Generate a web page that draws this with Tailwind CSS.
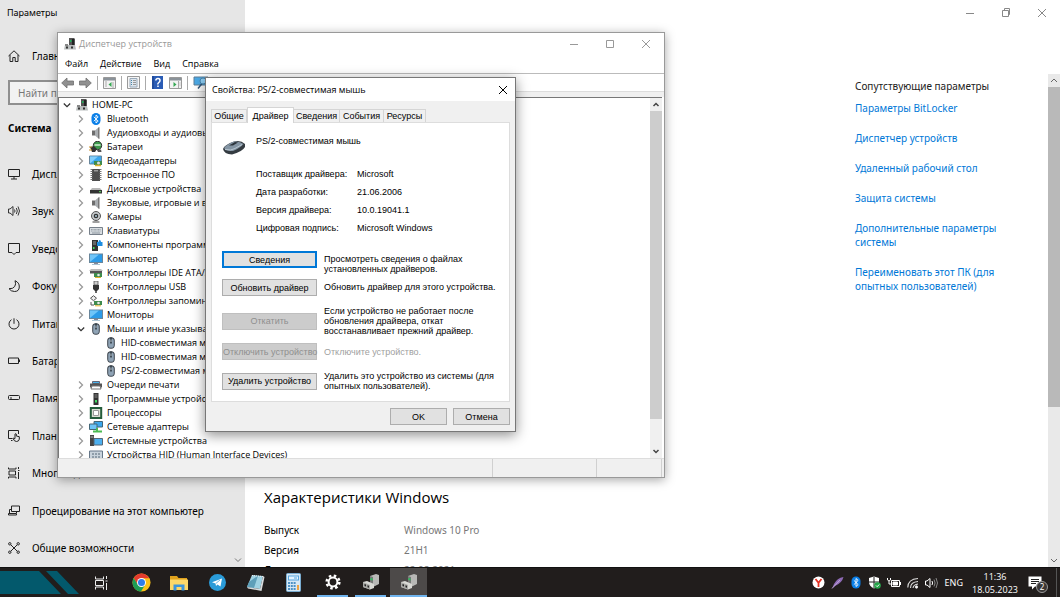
<!DOCTYPE html>
<html lang="ru">

<head>
    <meta charset="UTF-8">
    <meta name="viewport" content="width=device-width, initial-scale=1.0">
    <script src="https://cdn.jsdelivr.net/npm/@tailwindcss/browser@4"></script>
    <title>Диспетчер устройств</title>
</head>

<body class="h-screen flex flex-col overflow-hidden bg-white text-black text-[10px] leading-[14px] font-['Noto_Sans','Open_Sans',sans-serif]">

    <!-- shared icons -->
    <svg class="hidden">
        <symbol id="right" viewBox="0 0 8 10"><path d="M2 1.5L5.5 5L2 8.500" fill="none" stroke="#9a9a9a" stroke-width="1.3" /></symbol>
        <symbol id="down" viewBox="0 0 8 10"><path d="M.8 3.500L4 6.700L7.200 3.500" fill="none" stroke="#333" stroke-width="1.3" /></symbol>
        <symbol id="min" viewBox="0 0 10 10"><path d="M1 5.500h8" stroke="currentColor" /></symbol>
        <symbol id="close" viewBox="0 0 10 10"><path d="M1 1l8 8M9 1l-8 8" stroke="currentColor" /></symbol>
        <symbol id="pc" viewBox="0 0 12 12">
            <path d="M5 0h5l1 1v6H5z" fill="#555" /><path d="M8 1h2v6H8z" fill="#222" /><path d="M6 2h1.500v2H6z" fill="#1fae5a" />
            <path d="M1 7h10l1 4.500H0z" fill="#b9bdbd" /><path d="M1 6h3v2H1z" fill="#888" /><path d="M2 8.500h2v2H2zM7 8.500h2v2H7z" fill="#333" />
        </symbol>
        <symbol id="mouse" viewBox="0 0 12 12">
            <rect x="2.200" y=".3" width="7.600" height="11.400" rx="3.600" fill="#3a424b" /><rect x="3.200" y="1.200" width="5.600" height="9.600" rx="2.600" fill="#8fa3b5" />
            <path d="M6 .5v6" stroke="#222b33" stroke-width="1.400" /><path d="M6 2.500v2.500" stroke="#dfe8ee" stroke-width=".7" />
        </symbol>
        <symbol id="speaker" viewBox="0 0 12 12">
            <path d="M2 3.500h3v5H2z" fill="#6d6d6d" /><path d="M5 3.500L9 0v12L5 8.500z" fill="#a9adb0" /><path d="M8 1L9.500 0v12L8 11z" fill="#777" />
        </symbol>
        <symbol id="monitor" viewBox="0 0 14 12">
            <rect x=".5" y="1" width="13" height="8.500" fill="#2c9be8" stroke="#69869b" /><path d="M1 9V1.500h9z" fill="#6fc5f9" /><path d="M5 10h4v1H5z" fill="#889" /><path d="M3 11.500h8" stroke="#a9c3d3" />
        </symbol>
        <symbol id="device" viewBox="0 0 18 18">
            <path d="M8 3l6-2 3 1v9l-6 3-3-2z" fill="#b8b8b6" /><path d="M8 3l3 1v10l-3-2z" fill="#777" /><path d="M8.500 5l2 .5v2l-2-.5z" fill="#27c15a" />
            <path d="M1 9l4-1 7 3v4l-4 1.500L1 14z" fill="#d9d9d5" /><path d="M1 9l7 3v4.500L1 14z" fill="#a9a9a6" /><path d="M2.500 11l1.500.6v2L2.500 13zM5.500 12.200l1.500.6v2l-1.500-.6z" fill="#222" />
        </symbol>
        <symbol id="bluetooth" viewBox="0 0 12 12">
            <rect x="1.500" width="9" height="12" rx="4.500" fill="#0a7fe8" /><path d="M3.800 3.800l4.400 4.300L6 10V2l2.200 1.900-4.400 4.300" fill="none" stroke="#fff" stroke-width=".9" />
        </symbol>
    </svg>

    <div class="relative flex-1 min-h-0 overflow-hidden flex">

        <!-- settings: left menu -->
        <nav class="relative w-[245px] shrink-0 bg-[#e6e6e6] flex flex-col">
            <h1 class="h-[25px] pl-[7px] pt-[6px] text-[9px]">Параметры</h1>
            <a href="#" class="h-[55px] px-2 pt-[6px] flex items-center gap-3">
                <svg class="w-3 h-3" viewBox="0 0 12 12" fill="none" stroke="#222"><path d="M.5 6L6 .8 11.500 6M2 5v6.500h2.800V7.500h2.400v4H10V5" /></svg>Главная
            </a>
            <input type="text" placeholder="Найти параметр" aria-label="Найти параметр" class="mx-2 h-[25px] border-2 border-[#8f8f8f] px-2 placeholder:text-[#777] bg-[#f2f2f2]">
            <h2 class="h-[50px] pl-2 pt-4 font-bold">Система</h2>
            <div class="flex-1 flex flex-col">
                <a href="#" class="flex-1 px-2 flex items-center gap-3">
                    <svg class="w-3 h-3" viewBox="0 0 12 12" fill="none" stroke="#222"><path d="M.5 1.500h11v7H.5zM6 8.500v2.500M3 11h6" /></svg>Дисплей
                </a>
                <a href="#" class="flex-1 px-2 flex items-center gap-3">
                    <svg class="w-3 h-3" viewBox="0 0 12 12" fill="none" stroke="#222"><path d="M.5 4v4H2l3 2.500v-9L2 4zM6.500 4.500q1 1.500 0 3M8.300 3q2 3 0 6M10 1.500q3 4.500 0 9" stroke-width=".9" /></svg>Звук
                </a>
                <a href="#" class="flex-1 px-2 flex items-center gap-3">
                    <svg class="w-3 h-3" viewBox="0 0 12 12" fill="none" stroke="#222"><path d="M.5.5h11v9H8l-2 2-2-2H.5z" /></svg>Уведомления и действия
                </a>
                <a href="#" class="flex-1 px-2 flex items-center gap-3">
                    <svg class="w-3 h-3" viewBox="0 0 12 12" fill="none" stroke="#222"><path d="M7 .7Q11.500 2.500 11.300 7T6.500 11.500Q3 11.500 1 8.700 5 9 6.700 6.500T7 .7z" /></svg>Фокусировка внимания
                </a>
                <a href="#" class="flex-1 px-2 flex items-center gap-3">
                    <svg class="w-3 h-3" viewBox="0 0 12 12" fill="none" stroke="#222"><path d="M6 .3v5.500M3.500 1.700a5 5 0 1 0 5 0" /></svg>Питание и спящий режим
                </a>
                <a href="#" class="flex-1 px-2 flex items-center gap-3">
                    <svg class="w-3 h-3" viewBox="0 0 12 12" fill="none" stroke="#222"><path d="M.5 3h10v5.500H.5zM11.500 4.500v2.500" /></svg>Батарея
                </a>
                <a href="#" class="flex-1 px-2 flex items-center gap-3">
                    <svg class="w-3 h-3" viewBox="0 0 12 12" fill="none" stroke="#222"><rect x=".5" y="3.500" width="11" height="4" rx="1" /><path d="M2 6h2" /></svg>Память
                </a>
                <a href="#" class="flex-1 px-2 flex items-center gap-3">
                    <svg class="w-3 h-3" viewBox="0 0 12 12" fill="none" stroke="#222"><path d="M4.500 8.500h-4v-8h10v3.500M7 8.500V4q.7-.8 1.300 0v2l3 .7v2.500q-.5 2.300-2.800 2.300T5 8.500q.7-1 2 .5M3 10.500h1.500" /></svg>Планшет
                </a>
                <a href="#" class="flex-1 px-2 flex items-center gap-3">
                    <svg class="w-3 h-3" viewBox="0 0 12 12" fill="none" stroke="#222"><path d="M.5.500v1.500h7.500V.500M1 4h6.500v4H1zM.5 11.500V10h7.500v1.500M10.500 0v2M10.500 5v7M10 3.500h1.500" /></svg>Многозадачность
                </a>
                <a href="#" class="flex-1 px-2 flex items-center gap-3">
                    <svg class="w-3 h-3" viewBox="0 0 12 12" fill="none" stroke="#222"><path d="M3.500 1h8v5.500h-8zM3.500 4.500h-2v4M.5 8.500v1.500h8V8.500zM8.500 8V6.500" /></svg>Проецирование на этот компьютер
                </a>
                <a href="#" class="flex-1 px-2 flex items-center gap-3">
                    <svg class="w-3 h-3" viewBox="0 0 12 12" fill="none" stroke="#222"><path d="M3 3l6 6M9 3L3 9" /><circle cx="1.800" cy="1.800" r="1.200" /><circle cx="10.200" cy="1.800" r="1.200" /><circle cx="1.800" cy="10.200" r="1.200" /><circle cx="10.200" cy="10.200" r="1.200" /></svg>Общие возможности
                </a>
            </div>
            <svg class="absolute right-[3px] bottom-[3px] w-2 h-2" viewBox="0 0 8 8" fill="none" stroke="#777"><path d="M1 2.500l3 3 3-3" /></svg>
        </nav>

        <!-- settings: page -->
        <div class="flex-1 min-w-0 flex flex-col">
            <div class="h-[25px] shrink-0 flex justify-end text-[#888]">
                <button class="w-9 flex items-center justify-center" aria-label="Свернуть"><svg class="w-[10px] h-[10px]"><use href="#min" /></svg></button>
                <button class="w-9 flex items-center justify-center" aria-label="Восстановить"><svg class="w-[10px] h-[10px]" viewBox="0 0 10 10" fill="none" stroke="currentColor"><path d="M1.500 2.500h6v6h-6zM3.500 2.500V.5h5v6h-1" /></svg></button>
                <button class="w-9 flex items-center justify-center" aria-label="Закрыть"><svg class="w-[10px] h-[10px]"><use href="#close" /></svg></button>
            </div>
            <div class="flex-1 min-h-0 flex">
                <main class="flex-1 min-w-0 pl-[19px] pt-[462px]">
                    <h2 class="text-[15px] leading-5 font-['Open_Sans','Noto_Sans',sans-serif]">Характеристики Windows</h2>
                    <dl class="mt-[13px] grid grid-cols-[140px_1fr] leading-[20px]">
                        <dt>Выпуск</dt><dd class="text-[#777]">Windows 10 Pro</dd>
                        <dt>Версия</dt><dd class="text-[#777]">21H1</dd>
                        <dt>Дата установки</dt><dd class="text-[#777]">22.08.2021</dd>
                    </dl>
                </main>
                <aside class="w-[155px] mr-[38px] pt-[54px] text-[#0078d7] flex flex-col items-start gap-4">
                    <h3 class="text-[#222] -mb-2">Сопутствующие параметры</h3>
                    <a href="#">Параметры BitLocker</a>
                    <a href="#">Диспетчер устройств</a>
                    <a href="#">Удаленный рабочий стол</a>
                    <a href="#">Защита системы</a>
                    <a href="#">Дополнительные параметры системы</a>
                    <a href="#">Переименовать этот ПК (для опытных пользователей)</a>
                </aside>
                <div class="w-3 mt-[49px] bg-[#e9e9e9] flex flex-col items-center">
                    <svg class="w-2 h-[13px] shrink-0" viewBox="0 0 8 13" fill="none" stroke="#666"><path d="M1 8l3-3 3 3" /></svg>
                    <div class="w-full h-[65%] bg-[#b9b9b9]"></div>
                    <svg class="w-2 h-[13px] mt-auto" viewBox="0 0 8 13" fill="none" stroke="#666"><path d="M1 5l3 3 3-3" /></svg>
                </div>
            </div>
        </div>

        <!-- device manager window -->
        <section class="absolute left-[57px] top-[32px] w-[608px] h-[446px] bg-white border border-[#999] shadow-[0_2px_10px_rgba(0,0,0,0.35)] flex flex-col text-[9px] font-['Open_Sans','Noto_Sans',sans-serif]">
            <header class="h-[22px] shrink-0 flex items-center text-[#999]">
                <svg class="w-3 h-3 ml-[6px] mr-[3px]"><use href="#pc" /></svg>
                <h2>Диспетчер устройств</h2>
                <button class="ml-auto w-9 h-full flex items-center justify-center" aria-label="Свернуть"><svg class="w-[10px] h-[10px]"><use href="#min" /></svg></button>
                <button class="w-9 h-full flex items-center justify-center" aria-label="Развернуть"><svg class="w-[10px] h-[10px]" viewBox="0 0 10 10" fill="none" stroke="currentColor"><path d="M1.500 1.500h7v7h-7z" /></svg></button>
                <button class="w-9 h-full flex items-center justify-center" aria-label="Закрыть"><svg class="w-[10px] h-[10px]"><use href="#close" /></svg></button>
            </header>
            <div class="h-[18px] shrink-0 px-[7px] flex items-center gap-3">
                <button>Файл</button><button>Действие</button><button>Вид</button><button>Справка</button>
            </div>
            <div class="h-[19px] shrink-0 border-y border-[#bbb] border-b-[#ddd] pl-[3px] flex items-center gap-[5px]">
                <button aria-label="Назад"><svg class="w-[13px] h-[12px]" viewBox="0 0 13 12"><path d="M.7 6L6 1v3h6.500v4H6v3z" fill="#909090" stroke="#6f6f6f" stroke-width=".8" /></svg></button>
                <button aria-label="Вперед"><svg class="w-[13px] h-[12px]" viewBox="0 0 13 12"><path d="M12.300 6L7 1v3H.5v4H7v3z" fill="#909090" stroke="#6f6f6f" stroke-width=".8" /></svg></button>
                <i class="w-px h-[14px] bg-[#aaa]"></i>
                <button aria-label="Дерево консоли"><svg class="w-[13px] h-[12px]" viewBox="0 0 13 12"><path d="M.5.500h12v11H.5z" fill="#f3f3f3" stroke="#999" /><path d="M1 1h11v2.500H1z" fill="#8a9299" /><path d="M2 5h2M2 7h2M2 9h2M10 5v6" stroke="#aaa" /><path d="M8.500 5v5L5.500 7.500z" fill="#35a853" /></svg></button>
                <i class="w-px h-[14px] bg-[#aaa]"></i>
                <button aria-label="Свойства"><svg class="w-[13px] h-[13px]" viewBox="0 0 13 13"><path d="M.5.500h12v12H.5z" fill="#f5f5f5" stroke="#999" /><path d="M3 2.500h7v8.500H3z" fill="#dfe7ee" stroke="#9ab" /><path d="M4 4.500h1M4 6.500h1M4 8.500h1" stroke="#48a" /><path d="M6 4.500h3M6 6.500h3M6 8.500h3" stroke="#999" /></svg></button>
                <i class="w-px h-[14px] bg-[#aaa]"></i>
                <button aria-label="Справка"><svg class="w-[13px] h-[13px]" viewBox="0 0 13 13"><path d="M1 0h11v13H1z" fill="#2a5cb5" /><path d="M2 0v13" stroke="#163d85" /><path d="M4.800 4.500Q5 2.500 7 2.500t2 2q0 1.200-1.200 2T7 8.500M7 9.500v1.500" fill="none" stroke="#fff" stroke-width="1.500" /></svg></button>
                <button aria-label="Панель действий"><svg class="w-[13px] h-[12px]" viewBox="0 0 13 12"><path d="M.5.500h12v11H.5z" fill="#f3f3f3" stroke="#999" /><path d="M1 1h11v2.500H1z" fill="#8a9299" /><path d="M9.500 4v7M10.500 6h1M10.500 8h1" stroke="#aaa" /><path d="M4.500 5v5l3-2.500z" fill="#35a853" /></svg></button>
                <i class="w-px h-[14px] bg-[#aaa]"></i>
                <button aria-label="Обновить конфигурацию"><svg class="w-[16px] h-[13px]" viewBox="0 0 16 13"><path d="M1 1h14v8H1z" fill="#4ba9e6" stroke="#5d7f98" /><path d="M5 12.500l4-5" stroke="#357" stroke-width="1.500" /><circle cx="10" cy="5" r="3" fill="#8fd0f7" stroke="#4b86ad" /></svg></button>
            </div>
            <div class="h-[5px] shrink-0 bg-[#f0f0f0]"></div>
            <div class="flex-1 min-h-0 border-t border-l border-[#777] mr-[2px] flex">
                <ul class="flex-1 overflow-hidden pl-1 whitespace-nowrap [&_li]:h-[14px] [&_li]:flex [&_li]:items-center [&_svg]:shrink-0">
                    <li><svg class="w-2 h-[10px]"><use href="#down" /></svg><svg class="w-3 h-3 ml-[5px] mr-1"><use href="#pc" /></svg>HOME-PC</li>
                    <li class="pl-[14px]"><svg class="w-2 h-[10px]"><use href="#right" /></svg><svg class="w-[14px] h-3 mx-1"><use href="#bluetooth" /></svg>Bluetooth</li>
                    <li class="pl-[14px]"><svg class="w-2 h-[10px]"><use href="#right" /></svg><svg class="w-[14px] h-3 mx-1"><use href="#speaker" /></svg>Аудиовходы и аудиовыходы</li>
                    <li class="pl-[14px]"><svg class="w-2 h-[10px]"><use href="#right" /></svg><svg class="w-[14px] h-3 mx-1" viewBox="0 0 14 12"><circle cx="8.500" cy="4.500" r="4.200" fill="#3c9a4c" stroke="#333" /><path d="M5.500 4h6" stroke="#dff5df" stroke-width="1.400" /><path d="M1 6l4-1 3 3-2 3H3z" fill="#333" /><path d="M0 6h3M0 9h3" stroke="#c98e27" /><path d="M8 9l4-.5.5 2.500H9z" fill="#555" /></svg>Батареи</li>
                    <li class="pl-[14px]"><svg class="w-2 h-[10px]"><use href="#right" /></svg><svg class="w-[14px] h-3 mx-1" viewBox="0 0 14 12"><path d="M.5 1h12v8H.5z" fill="#3ba7ee" stroke="#69869b" /><path d="M1 8.500v-7h8z" fill="#83cffb" /><path d="M5 6h8v4H5z" fill="#3e8b4d" /><circle cx="9.500" cy="8" r="1.500" fill="#ddd" /><path d="M6 10.500h6" stroke="#e0b32a" stroke-width="1.500" /></svg>Видеоадаптеры</li>
                    <li class="pl-[14px]"><svg class="w-2 h-[10px]"><use href="#right" /></svg><svg class="w-[14px] h-3 mx-1" viewBox="0 0 14 12"><path d="M3 0h8v12H3z" fill="#4d4d4d" /><path d="M2.500 0v12M11.500 0v12" stroke="#777" stroke-width="2" stroke-dasharray="1 1" /><path d="M5 1h4v1.500H5z" fill="#999" /></svg>Встроенное ПО</li>
                    <li class="pl-[14px]"><svg class="w-2 h-[10px]"><use href="#right" /></svg><svg class="w-[14px] h-3 mx-1" viewBox="0 0 14 12"><path d="M3 5h8l2 2.500H1z" fill="#b7b7b7" /><path d="M1 7h12v3.500H1z" fill="#333" /><path d="M10 8.700h2" stroke="#5ddf62" /></svg>Дисковые устройства</li>
                    <li class="pl-[14px]"><svg class="w-2 h-[10px]"><use href="#right" /></svg><svg class="w-[14px] h-3 mx-1"><use href="#speaker" /></svg>Звуковые, игровые и видеоустройства</li>
                    <li class="pl-[14px]"><svg class="w-2 h-[10px]"><use href="#right" /></svg><svg class="w-[14px] h-3 mx-1" viewBox="0 0 14 12"><circle cx="7" cy="5" r="4.500" fill="#c2c6c9" stroke="#555" /><circle cx="7" cy="5" r="2.300" fill="#333" /><circle cx="7" cy="5" r=".9" fill="#bde" /><path d="M3.500 11h7" stroke="#888" stroke-width="1.600" /></svg>Камеры</li>
                    <li class="pl-[14px]"><svg class="w-2 h-[10px]"><use href="#right" /></svg><svg class="w-[14px] h-3 mx-1" viewBox="0 0 14 12"><path d="M.5 2.500h13v7H.5z" fill="#d8dde1" stroke="#77808a" /><path d="M2 4.500h10M2 6h10" stroke="#8b949d" stroke-width=".8" stroke-dasharray="1 .4" /><path d="M3 8h8" stroke="#8b949d" /></svg>Клавиатуры</li>
                    <li class="pl-[14px]"><svg class="w-2 h-[10px]"><use href="#right" /></svg><svg class="w-[14px] h-3 mx-1" viewBox="0 0 14 12"><path d="M3 1h6v11H3z" fill="#333" /><path d="M4 3h3M4 5h3" stroke="#999" /><path d="M4 8h1.500v2H4z" fill="#3edc63" /><path d="M8 3h1.500q0-2 1.200-2t1.300 2h1.500v4H8z" fill="#1e8de0" /></svg>Компоненты программного обеспечения</li>
                    <li class="pl-[14px]"><svg class="w-2 h-[10px]"><use href="#right" /></svg><svg class="w-[14px] h-3 mx-1"><use href="#monitor" /></svg>Компьютер</li>
                    <li class="pl-[14px]"><svg class="w-2 h-[10px]"><use href="#right" /></svg><svg class="w-[14px] h-3 mx-1" viewBox="0 0 14 12"><path d="M2 2h10l2 2H0z" fill="#bbb" /><path d="M1 4h12v2.500H1z" fill="#555" /><path d="M5 6h8v4H5z" fill="#3e8b4d" /><circle cx="9.500" cy="8" r="1.300" fill="#e8e8e8" /><path d="M6 10.500h6" stroke="#e0b32a" /></svg>Контроллеры IDE ATA/ATAPI</li>
                    <li class="pl-[14px]"><svg class="w-2 h-[10px]"><use href="#right" /></svg><svg class="w-[14px] h-3 mx-1" viewBox="0 0 14 12"><path d="M5 0h4v4H5z" fill="#ccc" stroke="#555" stroke-width=".8" /><path d="M4 4h6v4L8 10H6L4 8z" fill="#333" /><path d="M7 10v2" stroke="#333" stroke-width="1.500" /></svg>Контроллеры USB</li>
                    <li class="pl-[14px]"><svg class="w-2 h-[10px]"><use href="#right" /></svg><svg class="w-[14px] h-3 mx-1" viewBox="0 0 14 12"><path d="M4.500.7l3 2.500-3 2.500-3-2.500z" fill="#eee" stroke="#555" /><path d="M2 7v3h3" fill="none" stroke="#555" /><path d="M5 6h8v4H5z" fill="#3e8b4d" /><circle cx="9.500" cy="8" r="1.300" fill="#e8e8e8" /><path d="M6 10.800h6" stroke="#e0b32a" /></svg>Контроллеры запоминающих устройств</li>
                    <li class="pl-[14px]"><svg class="w-2 h-[10px]"><use href="#right" /></svg><svg class="w-[14px] h-3 mx-1"><use href="#monitor" /></svg>Мониторы</li>
                    <li class="pl-[14px]"><svg class="w-2 h-[10px]"><use href="#down" /></svg><svg class="w-[14px] h-3 mx-1"><use href="#mouse" /></svg>Мыши и иные указывающие устройства</li>
                    <li class="pl-[41px]"><svg class="w-[14px] h-3 mr-[3px]"><use href="#mouse" /></svg>HID-совместимая мышь</li>
                    <li class="pl-[41px]"><svg class="w-[14px] h-3 mr-[3px]"><use href="#mouse" /></svg>HID-совместимая мышь</li>
                    <li class="pl-[41px]"><svg class="w-[14px] h-3 mr-[3px]"><use href="#mouse" /></svg>PS/2-совместимая мышь</li>
                    <li class="pl-[14px]"><svg class="w-2 h-[10px]"><use href="#right" /></svg><svg class="w-[14px] h-3 mx-1" viewBox="0 0 14 12"><path d="M3.500 2.500h7v2h-7z" fill="#49b4ec" stroke="#667" /><path d="M1 4.500h12v4H1z" fill="#555" /><path d="M3 7h8l1 3H2z" fill="#fff" stroke="#777" /></svg>Очереди печати</li>
                    <li class="pl-[14px]"><svg class="w-2 h-[10px]"><use href="#right" /></svg><svg class="w-[14px] h-3 mx-1" viewBox="0 0 14 12"><path d="M4.500 0h5v12h-5z" fill="#333" /><path d="M5.500 2h3M5.500 4h3" stroke="#888" /><path d="M6 7h2v2.500H6z" fill="#3edc63" /></svg>Программные устройства</li>
                    <li class="pl-[14px]"><svg class="w-2 h-[10px]"><use href="#right" /></svg><svg class="w-[14px] h-3 mx-1" viewBox="0 0 14 12"><path d="M1.800 1h10.400v10H1.800z" fill="#d9ddd2" stroke="#245c3b" stroke-width="2" /><path d="M4.500 3.500h5v5h-5z" fill="#fff" stroke="#999" /></svg>Процессоры</li>
                    <li class="pl-[14px]"><svg class="w-2 h-[10px]"><use href="#right" /></svg><svg class="w-[14px] h-3 mx-1" viewBox="0 0 14 12"><path d="M5 .5h8.500V6H5z" fill="#3ba7ee" stroke="#467" /><path d="M.5 3H8v5.500H.5z" fill="#6cc3f7" stroke="#467" /><path d="M4 10.500h9" stroke="#4cba52" stroke-width="2" /><path d="M8 7v3" stroke="#4cba52" stroke-width="2" /></svg>Сетевые адаптеры</li>
                    <li class="pl-[14px]"><svg class="w-2 h-[10px]"><use href="#right" /></svg><svg class="w-[14px] h-3 mx-1" viewBox="0 0 14 12"><path d="M1 0h4v11H1z" fill="#444" /><path d="M1.500 2h3" stroke="#bbb" /><path d="M5 3.500h8.500V10H5z" fill="#4cb0f0" stroke="#567" /></svg>Системные устройства</li>
                    <li class="pl-[14px]"><svg class="w-2 h-[10px]"><use href="#right" /></svg><svg class="w-[14px] h-3 mx-1" viewBox="0 0 14 12"><path d="M.5 2h13v8H.5z" fill="#c9d3dc" stroke="#678" /><path d="M3 5h8M3 8h8" stroke="#567" stroke-dasharray="2 1" /></svg>Устройства HID (Human Interface Devices)</li>
                </ul>
                <div class="w-3 bg-[#f0f0f0] flex flex-col items-center">
                    <svg class="w-2 h-[13px] shrink-0" viewBox="0 0 8 13" fill="none" stroke="#444" stroke-width="1.500"><path d="M1.500 8L4 5.500 6.500 8" /></svg>
                    <div class="w-full h-[308px] bg-[#cdcdcd]"></div>
                    <svg class="w-2 h-[13px] mt-auto" viewBox="0 0 8 13" fill="none" stroke="#444" stroke-width="1.500"><path d="M1.500 5L4 7.500 6.500 5" /></svg>
                </div>
            </div>
            <footer class="h-[19px] shrink-0 border-t border-[#ddd] bg-[#f0f0f0] flex justify-end">
                <div class="w-[104px] border-l border-[#d0d0d0]"></div>
                <div class="w-[66px] mr-[2px] border-x border-[#d0d0d0]"></div>
            </footer>
        </section>

        <!-- driver properties dialog -->
        <section role="dialog" aria-labelledby="dialogTitle" class="absolute left-[205px] top-[77px] w-[311px] h-[355px] bg-[#f0f0f0] border border-[#777] shadow-[0_3px_12px_rgba(0,0,0,0.45)] flex flex-col text-[9px] leading-[10px] font-['Liberation_Sans',Arial,sans-serif]">
            <header class="h-[23px] shrink-0 bg-white pl-[6px] flex items-center justify-between font-['Open_Sans','Noto_Sans',sans-serif]">
                <h2 id="dialogTitle">Свойства: PS/2-совместимая мышь</h2>
                <button class="w-6 h-full flex items-center justify-center" aria-label="Закрыть"><svg class="w-[10px] h-[10px]"><use href="#close" /></svg></button>
            </header>
            <div class="mt-[6px] h-[15px] pl-[5px] flex items-end [&_button]:whitespace-nowrap" role="tablist">
                <button role="tab" class="w-9 h-[13px] border border-b-0 border-[#d5d5d5]">Общие</button>
                <button role="tab" aria-selected="true" class="w-[47px] h-4 relative -mb-px bg-white border border-b-0 border-[#d5d5d5]">Драйвер</button>
                <button role="tab" class="w-[46px] h-[13px] border border-b-0 border-l-0 border-[#d5d5d5]">Сведения</button>
                <button role="tab" class="w-11 h-[13px] border border-b-0 border-l-0 border-[#d5d5d5]">События</button>
                <button role="tab" class="w-[42px] h-[13px] border border-b-0 border-l-0 border-[#d5d5d5]">Ресурсы</button>
            </div>
            <div class="mx-[5px] h-[280px] bg-white border border-[#ddd] px-[10px]">
                <div class="h-[42px] pt-[13px] flex items-start gap-[10px]">
                    <svg class="w-6 h-[15px] mt-[4px]" viewBox="0 0 24 15"><path d="M1 9Q2 5 12 1.500 19 0 23 4v3Q20 12 10 14.500 2 14 1 9z" fill="#343b41" /><path d="M2 8Q5 4 12 1.500 18 1 21.500 4 18 8 11 11 4 11.500 2 8z" fill="#8495a4" /><path d="M7 5.500L13 2l3 .5-5 3z" fill="#2c343b" /><path d="M3 9.500q6 1.500 10-1l7-4" stroke="#b9c7d1" fill="none" /></svg>
                    <h3>PS/2-совместимая мышь</h3>
                </div>
                <dl class="pl-[34px] grid grid-cols-[101px_1fr] leading-[18px]">
                    <dt>Поставщик драйвера:</dt><dd>Microsoft</dd>
                    <dt>Дата разработки:</dt><dd>21.06.2006</dd>
                    <dt>Версия драйвера:</dt><dd>10.0.19041.1</dd>
                    <dt>Цифровая подпись:</dt><dd>Microsoft Windows</dd>
                </dl>
                <div class="mt-[14px] flex flex-col [&>div]:flex [&>div]:gap-[7px] [&_button]:w-[95px] [&_button]:h-[17px] [&_button]:shrink-0 [&_button]:border [&_button]:whitespace-nowrap">
                    <div class="h-7">
                        <button class="bg-[#e1e1e1] border-[#0078d7] outline outline-[#0078d7] -outline-offset-2">Сведения</button>
                        <p class="pt-[3px]">Просмотреть сведения о файлах<br>установленных драйверов.</p>
                    </div>
                    <div class="h-[27px]">
                        <button class="bg-[#e1e1e1] border-[#adadad]">Обновить драйвер</button>
                        <p class="pt-[3px]">Обновить драйвер для этого устройства.</p>
                    </div>
                    <div class="items-center">
                        <button disabled class="bg-[#cccccc] border-[#bfbfbf] text-[#8f8f8f]">Откатить</button>
                        <p>Если устройство не работает после<br>обновления драйвера, откат<br>восстанавливает прежний драйвер.</p>
                    </div>
                    <div class="items-center mt-[7px]">
                        <button disabled class="bg-[#cccccc] border-[#bfbfbf] text-[#8f8f8f]">Отключить устройство</button>
                        <p class="text-[#a0a0a0]">Отключите устройство.</p>
                    </div>
                    <div class="items-center mt-[11px]">
                        <button class="bg-[#e1e1e1] border-[#adadad]">Удалить устройство</button>
                        <p>Удалить это устройство из системы (для<br>опытных пользователей).</p>
                    </div>
                </div>
            </div>
            <div class="mt-[6px] mr-[5px] flex justify-end gap-[6px]">
                <button class="w-[57px] h-[17px] bg-[#e1e1e1] border border-[#adadad]">OK</button>
                <button class="w-[57px] h-[17px] bg-[#e1e1e1] border border-[#adadad]">Отмена</button>
            </div>
        </section>
    </div>

    <!-- taskbar -->
    <footer class="h-[30px] shrink-0 bg-[#211d1c] border-t border-[#111] text-white flex [&_button]:flex [&_button]:items-center [&_button]:justify-center">
        <button class="w-[82px]" aria-label="Пуск"><svg class="w-full h-full" viewBox="0 0 82 29"><path d="M0 3h39l22 23H0zM46 3h11l22 23H68z" fill="#03596c" /></svg></button>
        <button class="w-[38px] mr-[2px]" aria-label="Представление задач"><svg class="w-[14px] h-[14px]" viewBox="0 0 14 14" fill="none" stroke="#eee"><path d="M1.500.5V3h8V.5M1.500 4.500h8v5h-8zM1.500 13.500V11h8v2.500M12.500 0v3M12.500 7v7M11.500 5h2" /></svg></button>
        <button class="w-[38px]" aria-label="Chrome"><svg class="w-[19px] h-[19px]" viewBox="0 0 20 20"><circle cx="10" cy="10" r="9.500" fill="#fbc116" /><path d="M1.800 5.200A9.500 9.500 0 0 1 18.200 5.500H10L6 12z" fill="#e33b2e" /><path d="M1.800 5.200A9.500 9.500 0 0 0 9.500 19.500L14 12H6z" fill="#1e9d55" /><circle cx="10" cy="10" r="4.700" fill="#fff" /><circle cx="10" cy="10" r="3.700" fill="#2f7de9" /></svg></button>
        <button class="w-[38px]" aria-label="Проводник"><svg class="w-[18px] h-[16px]" viewBox="0 0 18 16"><path d="M0 1h7l1.500 2H17v3H0z" fill="#e0a21c" /><path d="M0 4.500h18V15H0z" fill="#fcd769" /><path d="M3.500 15.500v-6h11v6h-3V12h-5v3.500z" fill="#3d95db" /></svg></button>
        <button class="w-[38px]" aria-label="Telegram"><svg class="w-[17px] h-[17px]" viewBox="0 0 17 17"><circle cx="8.500" cy="8.500" r="8.500" fill="#2a9bd8" /><path d="M3 8.300L13 4.500 11.500 12.500 8.500 10.500 7 12 6.500 9.500z" fill="#fff" /><path d="M6.800 9.500L11 6" stroke="#2a9bd8" stroke-width=".7" /></svg></button>
        <button class="w-[38px]" aria-label="Блокнот"><svg class="w-[19px] h-[18px]" viewBox="0 0 19 18"><path d="M6 1l11 1-3 13-13-2z" fill="#9fd2e3" /><path d="M12 1.500L8 14l-7-1 2-5z" fill="#5e9fb9" /><path d="M17 2l1.500 1-3 14L2 14.500 1 13l13 2z" fill="#d9dcdd" /><path d="M6 1.500l11 1" stroke="#f3f3f3" stroke-dasharray="1 1" /></svg></button>
        <button class="w-[38px] mr-[2px]" aria-label="Калькулятор"><svg class="w-[15px] h-[19px]" viewBox="0 0 15 19"><rect x=".5" y=".5" width="14" height="18" rx="1" fill="#d6e8f5" stroke="#79acd0" /><path d="M2 2.500h11v5H2z" fill="#57a4dc" /><path d="M3 3.500h9v3H3z" fill="#e4f4ff" /><path d="M8 5h3" stroke="#57a4dc" /><path d="M2 10h8M2 13h8M2 16h8" stroke="#4e92c5" stroke-width="1.800" stroke-dasharray="2 .8" /><path d="M11 12h2v5h-2z" fill="#eda343" /></svg></button>
        <button class="w-[31px] mx-[3px] border-b-2 border-[#70b4ee]" aria-label="Параметры"><svg class="w-4 h-4" viewBox="0 0 16 16"><circle cx="8" cy="8" r="6.300" fill="none" stroke="#fff" stroke-width="2.600" stroke-dasharray="2.500 2.448" /><circle cx="8" cy="8" r="4.400" fill="none" stroke="#fff" stroke-width="2" /></svg></button>
        <button class="w-[31px] mx-[4px] border-b-2 border-[#70b4ee]" aria-label="Диспетчер устройств"><svg class="w-[18px] h-[18px]"><use href="#device" /></svg></button>
        <button class="w-[37px] border-b-2 border-[#70b4ee] bg-[#4d4a49]" aria-label="Свойства устройства"><svg class="w-[18px] h-[18px]"><use href="#device" /></svg></button>

        <div class="ml-auto flex items-center gap-[6px]">
            <svg class="w-[13px] h-[13px]" viewBox="0 0 13 13"><circle cx="6.500" cy="6.500" r="6" fill="#fff" /><path d="M3.500 3L6.500 6.800 9.500 3M6.500 6.500v4.500" fill="none" stroke="#e33124" stroke-width="1.800" /></svg>
            <svg class="w-[13px] h-[13px]" viewBox="0 0 13 13"><path d="M1 12.500L3 8q3-6 9.500-7Q11 7 4 10z" fill="#8e6ab5" /><path d="M1 12.500L9 4" stroke="#c9b4e0" stroke-width=".8" /></svg>
            <svg class="w-3 h-[13px]"><use href="#bluetooth" /></svg>
            <svg class="w-[13px] h-[13px]" viewBox="0 0 13 13"><path d="M6 .5L11 2v4q0 4-5 6.500Q1 10 1 6V2z" fill="#fff" /><path d="M6 1v11M1 6h10" stroke="#222" /><circle cx="9.500" cy="9.500" r="3.300" fill="#26a64a" /><path d="M8 9.500l1.200 1.200L11.200 8.500" fill="none" stroke="#fff" /></svg>
            <svg class="w-[14px] h-3" viewBox="0 0 14 12" fill="none" stroke="#fff"><path d="M4.500 3.500h8v6h-8z" /><path d="M6 5h4.500v3H6z" fill="#fff" /><path d="M13.500 5v3M.5 1v2q1.500 2 3 0V1M2 4v3h2" /></svg>
            <svg class="w-3 h-3" viewBox="0 0 12 12" fill="none" stroke="#ddd"><path d="M.8 10.500Q1 2 11 1.500M3.500 11Q3.500 5 11 4.500M6 11q.5-3.500 5-4" stroke-width="1.100" /><circle cx="9.500" cy="10" r="1.200" fill="#fff" /></svg>
            <svg class="w-[14px] h-3" viewBox="0 0 14 12" fill="none" stroke="#fff"><path d="M.5 4v4H2l3 2.500v-9L2 4zM7 4q1.200 2 0 4" /><path d="M9 2.500q2.200 3.500 0 7M11 1q3 5 0 10" stroke="#888" /></svg>
            <button class="text-[9px]">ENG</button>
            <div class="w-[52px] text-center text-[9px] leading-[13px] font-['Open_Sans','Noto_Sans',sans-serif]">11:36<br>18.05.2023</div>
            <button class="relative w-[35px] h-full -ml-[6px] pr-2" aria-label="Уведомления">
                <svg class="w-[14px] h-[14px]" viewBox="0 0 14 14"><path d="M.5.500h13v10H7l-3 3v-3H.5z" fill="#fff" /><path d="M3 3.500h8M3 5.500h8M3 7.500h5" stroke="#222" /></svg>
                <span class="absolute left-[15px] top-[13px] w-3 h-3 rounded-full bg-[#3a3736] border border-[#999] text-[8px] leading-[10px]">2</span>
            </button>
            <i class="w-[4px] h-[29px] -ml-[6px] border-l border-[#555]"></i>
        </div>
    </footer>
</body>

</html>
